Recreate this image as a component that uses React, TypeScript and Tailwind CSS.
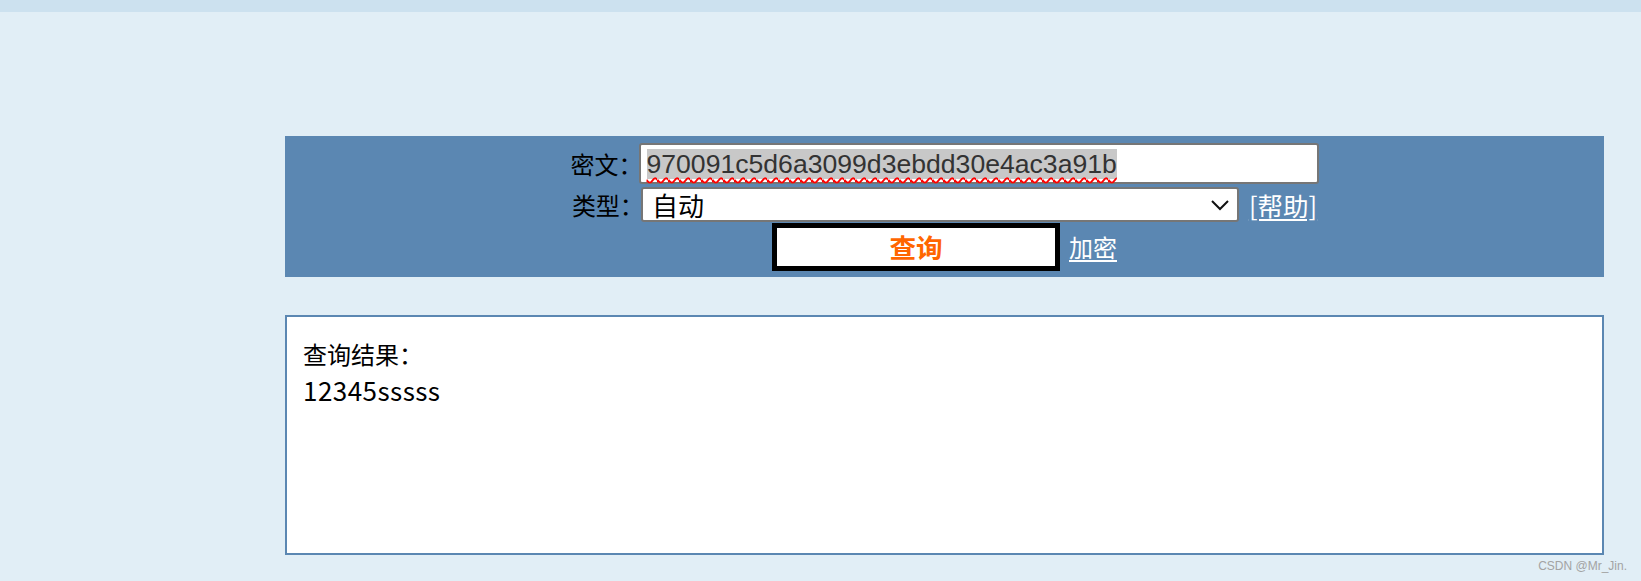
export default function App() {
  const cjk = "font-['Noto_Sans_CJK_SC','Microsoft_YaHei',sans-serif]";

  return (
    <div className={`relative h-[581px] w-full overflow-hidden bg-[#e1eef6] ${cjk}`}>
      {/* top strip */}
      <div className="h-[12px] bg-[#cce1ef]" />

      <div className="pl-[285px] pr-[37px]">
        {/* query panel */}
        <div className="mt-[124px] flex h-[141px] flex-col items-center bg-[#5b87b2] pt-[7px]">
          <div className="flex h-[41px] items-center justify-center">
            <span className="w-[68px] whitespace-nowrap text-[24px] leading-none text-black">密文：</span>
            <div className="flex h-[41px] w-[680px] items-center rounded-[3px] border-2 border-[#767676] bg-white px-[6px]">
              <span className="bg-[#c8c8c8] font-['Liberation_Sans',Arial,sans-serif] text-[26.6px] leading-[30px] text-[#333] underline decoration-[#ff0000] decoration-wavy decoration-[1.5px] underline-offset-[4px]">
                970091c5d6a3099d3ebdd30e4ac3a91b
              </span>
            </div>
          </div>

          <div className="mt-[3px] flex h-[35px] items-center justify-center">
            <span className="w-[69px] whitespace-nowrap text-[24px] leading-none text-black">类型：</span>
            <div className="flex h-[35px] w-[598px] items-center justify-between rounded-[3px] border-2 border-[#767676] bg-white pl-[9px] pr-[7px]">
              <span className="text-[26px] leading-none text-black">自动</span>
              <svg width="20" height="12" viewBox="0 0 20 12" fill="none">
                <polyline points="2,2 10,10 18,2" stroke="#111" strokeWidth="2" />
              </svg>
            </div>
            <a className="ml-[10px] whitespace-nowrap text-[25.5px] leading-none text-white underline underline-offset-[3px]">
              [帮助]
            </a>
          </div>

          <div className="mt-[1px] flex h-[48px] items-center justify-center">
            <button className="flex h-[48px] w-[288px] items-center justify-center border-[5px] border-black bg-white text-[26.6px] font-bold leading-none text-[#ff6600]">
              查询
            </button>
            <a className="ml-[9px] whitespace-nowrap text-[24px] leading-none text-white underline underline-offset-[3px]">
              加密
            </a>
          </div>
        </div>

        {/* result box */}
        <div className="mt-[38px] h-[240px] border-2 border-[#5b87b2] bg-white px-[16px] pt-[19px] text-[24px] leading-[36px] text-black">
          <div>查询结果：</div>
          <div className="text-[26px] tracking-[0.45px]">12345sssss</div>
        </div>
      </div>

      {/* watermark */}
      <div className="absolute right-[14px] top-[557px] font-['Liberation_Sans',Arial,sans-serif] text-[12px] text-[#a3a3a3]">
        CSDN @Mr_Jin.
      </div>
    </div>
  );
}
